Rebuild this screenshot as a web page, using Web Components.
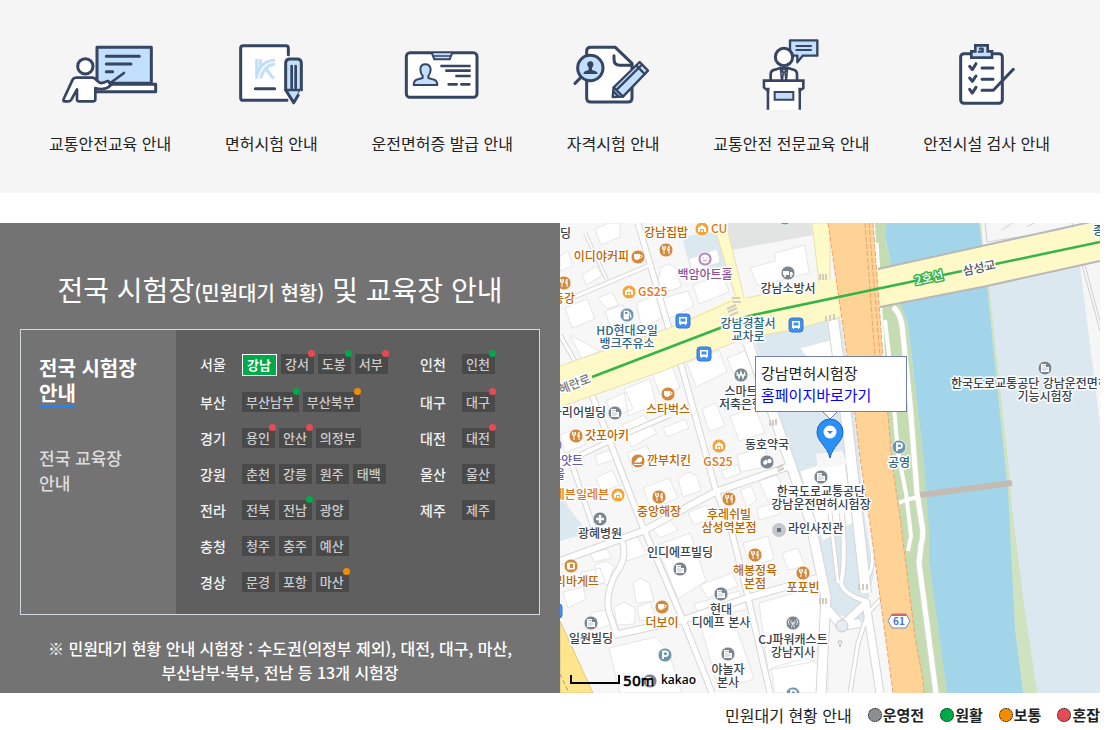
<!DOCTYPE html>
<html lang="ko">
<head>
<meta charset="utf-8">
<title>전국 시험장 및 교육장 안내</title>
<style>
  body {
    margin: 0 9px 0 0;
    background: #fff;
    color: #222;
    font: 16px/24px "Noto Sans CJK KR", "Noto Sans", sans-serif;
    overflow: hidden;
  }
</style>
</head>
<body>
<guide-page></guide-page>

<template id="page">
  <style>
    :host { display: block; }
    .columns { display: grid; grid-template-columns: 28fr 27fr; margin-top: 30px; }
  </style>
  <shortcut-bar>
    <shortcut-item icon="lecture">교통안전교육 안내</shortcut-item>
    <shortcut-item icon="exam">면허시험 안내</shortcut-item>
    <shortcut-item icon="license">운전면허증 발급 안내</shortcut-item>
    <shortcut-item icon="qualify">자격시험 안내</shortcut-item>
    <shortcut-item icon="podium">교통안전 전문교육 안내</shortcut-item>
    <shortcut-item icon="checklist">안전시설 검사 안내</shortcut-item>
  </shortcut-bar>
  <div class="columns">
    <center-panel>
      <region-row name="서울"><center-chip selected>강남</center-chip><center-chip status="busy">강서</center-chip><center-chip status="good">도봉</center-chip><center-chip status="busy">서부</center-chip></region-row>
      <region-row name="인천"><center-chip status="good">인천</center-chip></region-row>
      <region-row name="부산"><center-chip status="good">부산남부</center-chip><center-chip status="normal">부산북부</center-chip></region-row>
      <region-row name="대구"><center-chip status="busy">대구</center-chip></region-row>
      <region-row name="경기"><center-chip status="busy">용인</center-chip><center-chip status="busy">안산</center-chip><center-chip>의정부</center-chip></region-row>
      <region-row name="대전"><center-chip status="busy">대전</center-chip></region-row>
      <region-row name="강원"><center-chip>춘천</center-chip><center-chip>강릉</center-chip><center-chip>원주</center-chip><center-chip>태백</center-chip></region-row>
      <region-row name="울산"><center-chip>울산</center-chip></region-row>
      <region-row name="전라"><center-chip>전북</center-chip><center-chip status="good">전남</center-chip><center-chip>광양</center-chip></region-row>
      <region-row name="제주"><center-chip>제주</center-chip></region-row>
      <region-row name="충청" class="wide"><center-chip>청주</center-chip><center-chip>충주</center-chip><center-chip>예산</center-chip></region-row>
      <region-row name="경상" class="wide"><center-chip>문경</center-chip><center-chip>포항</center-chip><center-chip status="normal">마산</center-chip></region-row>
    </center-panel>
    <center-map></center-map>
  </div>
  <status-legend>
    <status-key color="#8b8f90">운영전</status-key>
    <status-key color="#00aa4b">원활</status-key>
    <status-key color="#f08c00">보통</status-key>
    <status-key color="#e54b55">혼잡</status-key>
  </status-legend>
</template>

<template id="bar">
  <style>
    :host { display: block; background: #f5f5f5; }
    nav { display: flex; justify-content: space-between; padding: 34px 50px 38px 49px; }
  </style>
  <nav aria-label="바로가기"><slot></slot></nav>
</template>

<template id="item">
  <style>
    :host { display: block; }
    a { display: flex; flex-direction: column; align-items: center; gap: 17px; color: #222; text-decoration: none; }
    svg { width: 100px; height: 80px; margin: 0 -10px; fill: none; stroke: #364561; stroke-width: 9; stroke-linecap: round; stroke-linejoin: round; }
    .w { fill: #fff; } .b { fill: #c2dffd; }
    .solid { fill: #364561; stroke: none; }
  </style>
  <a href="#"><svg aria-hidden="true"></svg><span><slot></slot></span></a>
</template>

<template id="panel">
  <style>
    :host { display: block; background: #737373; color: #fff; }
    .inner { padding: 46px 20px 9px; text-align: center; }
    h2 { margin: 0 0 20px; font-size: 28px; line-height: 40px; font-weight: 400; }
    small { font-size: 20px; line-height: 20px; font-weight: 500; }
    .box { display: grid; grid-template-columns: 155px 1fr; border: 1px solid #d3d8e0; text-align: left; }
    .tabs { display: flex; flex-direction: column; align-items: flex-start; gap: 38px; padding: 25px 18px; }
    .tabs a { width: 110px; color: #ddd; font-size: 17px; line-height: 25px; font-weight: 500; text-decoration: none; }
    .tabs a.on { color: #fff; font-size: 20px; font-weight: 700; }
    .tabs a.on u { text-decoration: none; display: inline-block; border-bottom: 2px solid #1e85ff; }
    .rows { display: grid; grid-template-columns: 220px 1fr; row-gap: 16px; align-content: start; padding: 24px 0 22px 24px; background: #5f5f5f; }
    ::slotted(.wide) { grid-column: 1 / -1; }
    p { margin: 21px 0 0; font-weight: 500; }
  </style>
  <div class="inner">
    <h2>전국 시험장<small>(민원대기 현황)</small> 및 교육장 안내</h2>
    <div class="box">
      <nav class="tabs"><a class="on" href="#">전국 시험장<br><u>안내</u></a><a href="#">전국 교육장<br>안내</a></nav>
      <div class="rows"><slot></slot></div>
    </div>
    <p>※ 민원대기 현황 안내 시험장 : 수도권(의정부 제외), 대전, 대구, 마산,<br>부산남부·북부, 전남 등 13개 시험장</p>
  </div>
</template>

<template id="row">
  <style>
    :host { display: grid; grid-template-columns: 42px 1fr; align-items: start; }
    b { color: #f3f3f3; font-size: 14px; line-height: 20px; font-weight: 500; }
    div { display: flex; gap: 4px; align-items: flex-start; }
  </style>
  <b></b><div><slot></slot></div>
</template>

<template id="chip">
  <style>
    :host { display: block; position: relative; }
    button { display: block; margin: 0; padding: 0 5px 0 4px; border: 0; border-radius: 0; background: #494949; color: #ccc; font: 500 13px/20px "Noto Sans CJK KR", sans-serif; cursor: pointer; }
    :host([selected]) button { border: 1px solid #fff; background: #00aa4b; color: #fff; font-weight: 700; }
    i { display: none; position: absolute; top: -4px; right: -1px; width: 7px; height: 7px; border-radius: 50%; }
    :host([status]) i { display: block; }
    :host([status=good]) i { background: #00aa4b; }
    :host([status=normal]) i { background: #f08c00; }
    :host([status=busy]) i { background: #e54b55; }
  </style>
  <button type="button"><slot></slot></button><i></i>
</template>

<template id="legend">
  <style>
    :host { display: flex; justify-content: flex-end; align-items: center; gap: 16px; padding-top: 10px; line-height: 24px; white-space: nowrap; }
  </style>
  <span>민원대기 현황 안내</span><slot></slot>
</template>

<template id="key">
  <style>
    :host { display: flex; align-items: center; gap: 1px; font-size: 15px; font-weight: 700; }
    i { box-sizing: border-box; width: 14px; height: 14px; border: 1px dotted #000; border-radius: 50%; }
  </style>
  <i></i><slot></slot>
</template>

<template id="map">
  <style>
    :host { display: block; position: relative; overflow: hidden; background: #f7f7f7; }
    svg { display: block; width: 100%; height: 100%; min-height: 100%; }
    text { font-family: "Noto Sans CJK KR", sans-serif; font-size: 12px; font-weight: 500; text-anchor: middle; paint-order: stroke; stroke: #fff; stroke-width: 3px; stroke-linejoin: round; }
    .edge { fill: none; stroke: #d6d6d6; stroke-linejoin: round; }
    .road { fill: none; stroke: #fff; stroke-linejoin: round; }
    .bld { fill: #fff; stroke: #e6e6e6; }
    .info { position: absolute; left: 195px; top: 133px; box-sizing: border-box; width: 152px; padding: 5px; border: 1px solid #6f7fae; background: #fff; color: #222; font-size: 15px; line-height: 22px; white-space: nowrap; }
    .info span, .info a { display: block; }
    .info a { color: #00f; text-decoration: none; }
  </style>
  <svg viewBox="0 0 540 470" preserveAspectRatio="xMinYMin slice" role="img" aria-label="강남면허시험장 지도">
    <rect width="540" height="470" fill="#f7f7f7"/>
    <!-- campus and public ground -->
    <path d="M122 14L157 8 168 42 160 48 132 52ZM193 113L270 97 280 94 295 190 304 290 314 350 303 400 268 388 250 300 215 185Z" fill="#dce8f0"/>
    <path d="M0 264L8 284 28 310 0 318Z" fill="#dce8f0"/>
    <path d="M166 0H251L253 12 172 27Z" fill="#e2e3e3"/>
    <g class="bld">
      <path d="M0 33l8-5 5 15-13 5zM22 52l15-9 5 10-16 9zM101 44l8-3 8 5 4 18-18 6-5-12zM129 36l28-10 3 13-28 10zM133 62l30-11 6 18-30 12zM190 45l25-7 0-8 30-8 4 28-51 13z"/>
      <path d="M5 85l22-9 8 20-23 9zM38 75l14-6 7 13-12 4zM45 88l18-6 6 16-18 7zM76 80l20-8 6 23-20 10zM100 76l28-8 6 15-28 14zM10 112l30 16-18 8zM35 6l14-6h11v14l-19 8z"/>
      <path d="M46 178l20-9 7 17-19 8zM64 166l26-10 6 25-28 12zM92 150l20-7 8 22-20 7zM127 140l32-13 8 22-31 15zM167 135l18-7 12 20-20 10zM142 186l14-6 9 23-16 5zM170 193l25-8 10 25-26 8zM62 202l22-10 13 18-25 14zM103 205l22-9 4 9-22 9zM0 212l16-7 10 16-21 9z"/>
      <path d="M35 232l16-5 5 9-18 6zM36 255l16-8 7 15-18 7zM67 230l20-7 7 18-20 8zM83 265l26-10 9 20-27 11zM118 256l10-7 9 4 4 15-18 6zM161 248l16-7 4 9-16 6zM177 232l28-9 3 20-27 6zM180 267l11-4 6 14-10 7zM199 258l18-6 9 19-17 9zM197 285l18-5 5 11-21 6zM128 290l18-8 8 12-20 8zM92 305l18-8 8 10-18 8z"/>
      <path d="M60 320l17-7 10 18-20 7zM30 330l17-4 5 9-18 4zM35 342l11-4 8 5-6 19-11-3zM20 350l20-5 5 14-20 9zM3 369l20-5 3 12-18 9zM73 360l8-5 8 5 5 18-18 2zM54 384l10-5 11 6v16l-18 1zM77 384l13-5 6 16-16 3zM30 390l19-4 6 14-17 6zM98 322l32-12 16 48-28 18-20-50z"/>
      <path d="M140 362l32-12 6 13-31 12zM183 320l25-7 6 23-24 8zM222 330l16-5 7 18-17 4zM134 381l45-13 9 18-47 10zM49 425l46-11 13 13 14 43H60zM140 400l32-9 22 65-35 11zM199 380l60-17 3 48-10 28-44 8zM211 445l35-10 22 10v25h-53z"/>
      <path d="M240 248l25-8 20 0 8 60-30 18-8-20zM240 125l30-8 5 16-25 6z"/>
    </g>
    <!-- local streets: grey edge, then white surface -->
    <g id="streets"></g>
    <!-- stream banks and water -->
    <path d="M315 0H420L540 0V470H333L323 133Z" fill="#c5dcb2"/>
    <path d="M422 0L448 240 452 287 463 377 477 470H540V0Z" fill="#dce8f0"/>
    <path d="M327 0L325 18 332 45 342 83 347 100 364 240 371 307 369 337 387 470H477L463 377 452 287 448 240 422 0Z" fill="#d0e3c1"/>
    <path d="M327 0L325 12 332 45 344 90 348 101 364 240 369 307 369 337 387 470H463L455 407 448 267 445 240 427 63 419 0Z" fill="#a2d5ea"/>
    <path d="M421 0H540V25L423 22ZM520 43L540 200V38Z" fill="#f6f6f6"/>
    <path d="M425 0l2 19 87-14-2-5M442 7l10-7M467 4l7-4M522 42l18 66M525 42l15 56" fill="none" stroke="#d0d0d0"/>
    <g fill="none" stroke="#fff">
      <path d="M316 20l7 120" stroke-width="5"/>
      <path d="M333 84Q342 91 343 112L350 180 357 270 362 302Q364 312 361 322L359 340 376 470" stroke="#d6dccf" stroke-width="7"/>
      <path d="M333 84Q342 91 343 112L350 180 357 270 362 302Q364 312 361 322L359 340 376 470" stroke-width="5"/>
      <path d="M325 97L331 150 338 230 346 270 351 313 348 328M339 280l7-3 16-4" stroke-width="4"/>
    </g>
    <path d="M360 272L452 260" stroke="#c5bbb5" stroke-width="6"/>
    <!-- arterial roads -->
    <path d="M153 0H166L184 75H176Z M252 0H270V60H259Z" fill="#fffbc8" stroke="#e8dfb0"/>
    <path d="M0 143L115 103 177 72 184 75 253 60 270 57 318 46 422 23 540-1V38L427 63 320 84 280 94 233 107 185 115 100 149 0 184Z" fill="#fff9c7"/>
    <path d="M0 143L115 103 174 77M187 75L253 60M280 94L233 107 185 115 100 149 0 184" fill="none" stroke="#e8dfb0"/>
    <path d="M318 46L422 23 535-2M320 84L427 63 540 38" fill="none" stroke="#b8b8b8" stroke-width="2"/>
    <path d="M268 0L280 83 295 190 300 235 310 300 333 470H364L363 457 355 414 340 294 332 240 323 133 313 0Z" fill="#ffd396"/>
    <path d="M268 0L280 83 295 190 300 235 310 300 333 470M305 0L315 133M309 0L320 133M313 0L323 133 332 240 340 294 355 414 363 457 364 470" fill="none" stroke="#efa26e" stroke-dasharray="5 2"/>
    <path d="M0 398L33 470H0Z" fill="#ffe58b" stroke="#dec888"/>
    <path d="M0 451l9 19" stroke="#999" stroke-dasharray="4 3"/>
    <path d="M172 75h8m-7 4h8M167 86l9-4m-8 7l9-4m-8 8l9-4M260 51v6m3-6v6m3-6v6M266 93v5m4-6v6m4-7v6M210 197v6m3-6v6m3-7v6M217 245l6-3m-5 6l6-3M260 375v6m3-6v6m3-6v6M299 361v6m4-6v6m4-6v6" stroke="#d3cbc0" stroke-width="2"/>
    <path d="M32 154L160 105Q178 96 193 92L540 19" fill="none" stroke="#35b44a" stroke-width="2.5"/>
    <circle cx="282" cy="403" r="6" fill="#e5edf2" stroke="#c8c8c8"/>
    <path d="M278 418l4 0-2 6z" fill="#fff" stroke="#bbb"/>
    <!-- route shield -->
    <path d="M332 391h14l4 7-4 7h-14l-4-7z" fill="#fff" stroke="#6d8bd0"/>
    <path d="M332 391h14l1 2h-16z" fill="#c96a6a"/>
    <g id="pois"></g>
    <!-- scale -->
    <path d="M11 452v8h48v-8" fill="none" stroke="#000" stroke-width="2"/>
    <!-- selected centre -->
    <path d="M256 231l26-3 6 13-30 5z" fill="#f7f7f7"/>
    <path d="M262 188L270 196 278 188" fill="#fff" stroke="#6f7fae"/>
    <path d="M270 235C267 222 257 219 257 209A13 13 0 0 1 283 209C283 219 273 222 270 235Z" fill="#2b90f5" stroke="#1666bd"/>
    <circle cx="270" cy="209" r="6.500" fill="#fff"/><path d="M267 208h6l-3 3z" fill="#2b86e8"/>
  </svg>
  <div class="info"><span>강남면허시험장</span><a href="#">홈페이지바로가기</a></div>
</template>

<script>
const tpl = id => document.getElementById(id).content.cloneNode(true);

class Templated extends HTMLElement {
  static template = '';
  constructor() {
    super();
    this.attachShadow({ mode: 'open' }).append(tpl(this.constructor.template));
  }
  $(selector) { return this.shadowRoot.querySelector(selector); }
}

// Each drawing: [viewBox, markup]
const DRAWINGS = {
  lecture: ['60 12 300 240', `
    <path class="b" d="M171 52H334V160H171Z"/><path class="w" d="M165 163H347V185H165Z"/>
    <path d="M199 79H298M199 102H273M199 125H218"/>
    <circle class="w" cx="136" cy="109" r="23"/>
    <path class="w" stroke-width="8" d="M110 143H158Q165 144 171 152 180 162 190 158L203 153Q209 154 208 160H215L211 167Q192 183 166 174V208Q166 214 160 214H116Q111 214 111 208V178L94 209Q91 214 86 214H75Q68 214 71 207L98 149Q101 143 110 143Z"/>
    <path stroke-width="8" d="M211 159L252 129"/>`],
  exam: ['543 12 300 240', `
    <path class="w" d="M745 74V54Q745 47 738 47H610Q602 47 602 55V203Q602 211 610 211H741"/>
    <path d="M646 176H704"/>
    <g stroke="#c2dffd" stroke-width="9" stroke-linecap="butt"><path d="M650 87V146M661 87V112M705 91Q665 91 651 134M705 103Q673 104 662 145M678 117L701 146"/></g>
    <path class="b" d="M737 180V100Q737 87 750 87H771Q784 87 784 100V180L761 218Z"/>
    <path stroke-width="8" d="M737 180H784M755 108V174M767 108V174"/>
    <path stroke-width="8" stroke="#f5f5f5" stroke-linecap="butt" d="M785 184L778 194"/>
    <path class="solid" d="M754 209L761 224 768 209Z"/>`],
  license: ['97 12 300 240', `
    <rect class="w" x="140" y="68" width="212" height="134" rx="11"/>
    <path class="b" stroke-width="6" d="M217 70L224 88H270L277 70"/><path stroke-width="5" d="M224 78H270"/>
    <path class="b" stroke-width="6" d="M162 165Q162 151 175 148L189 144V138Q182 130 182 118 183 103 197 103 211 103 213 118 213 130 206 138V144L219 148Q233 151 233 165Z"/>
    <path stroke-width="8" stroke-linecap="butt" d="M242 108H333M257 122H333M287 138H333"/><path stroke-width="8" d="M267 163H291M305 163H329"/>`],
  qualify: ['613 12 300 240', `
    <path class="w" d="M684 72V64Q684 52 696 52H770L820 100V204Q820 216 808 216H697Q684 216 684 204Z"/>
    <path d="M766 77V88Q766 106 784 106H820"/>
    <circle class="b" cx="695" cy="114" r="38"/><path d="M666 143L649 160"/>
    <path class="solid" d="M674 132Q674 123 690 120V113Q683 106 686 99 690 92 698 94 706 98 704 107L700 114V120Q717 123 717 132Z"/>
    <path class="b" stroke-width="7" d="M765 172L843 96 868 122 793 200 762 201Z"/>
    <path stroke-width="7" d="M765 172L793 200M833 107L858 132M775 178L849 105M763 183L780 200"/>`],
  podium: ['127 12 300 240', `
    <path class="b" stroke-width="7" d="M274 31H356V77H312L296 97V77H274Z"/><path stroke-width="6" d="M293 48H337M293 60H337"/>
    <circle class="w" cx="256" cy="81" r="26"/>
    <path class="w" stroke-width="8" d="M216 150V132Q216 122 229 119L245 114H267L285 119Q295 122 295 132V150"/>
    <path class="w" stroke-width="5" d="M245 112L249 151M267 112L263 151M250 118H262L260 126H252ZM254 127L251 150M259 127L262 150"/>
    <path class="w" stroke-width="8" stroke-linecap="butt" stroke-linejoin="miter" d="M208 239V174M303 239V174"/>
    <path class="w" stroke-width="8" stroke-linejoin="miter" d="M196 152H314V174L303 182V174H208V182L196 172Z"/>
    <path fill="#fff" stroke="none" d="M201 157H309V173H299V239H213V173H201Z"/>
    <path class="b" stroke-width="6" stroke-linejoin="miter" d="M228 186H284V209H228Z"/>`],
  checklist: ['714 12 300 240', `
    <rect class="w" x="785" y="71" width="125" height="149" rx="10"/>
    <path class="b" stroke-width="8" stroke-linejoin="miter" d="M817 64H829V46H866V64H879V83H817Z"/><path stroke-width="7" d="M843 56H851V65H840"/>
    <path d="M812 109L820 119 831 101M812 144L820 154 831 138M812 178L820 189 831 172M849 114H882M849 148H882M849 181H883L943 118"/>`]
};

customElements.define('shortcut-item', class extends Templated {
  static template = 'item';
  connectedCallback() {
    const [box, art] = DRAWINGS[this.getAttribute('icon')];
    const svg = this.$('svg');
    svg.setAttribute('viewBox', box);
    svg.innerHTML = art;
  }
});
customElements.define('shortcut-bar', class extends Templated { static template = 'bar'; });
customElements.define('center-chip', class extends Templated { static template = 'chip'; });
customElements.define('center-panel', class extends Templated { static template = 'panel'; });
customElements.define('status-legend', class extends Templated { static template = 'legend'; });
customElements.define('region-row', class extends Templated {
  static template = 'row';
  connectedCallback() { this.$('b').textContent = this.getAttribute('name'); }
});
customElements.define('status-key', class extends Templated {
  static template = 'key';
  connectedCallback() { this.$('i').style.background = this.getAttribute('color'); }
});

// [width, path]
const STREETS = [
  [5, 'M78 0L109 106'], [2, 'M25 10L47 57'], [3, 'M0 80L90 42'], [3, 'M0 112L17 142'],
  [5, 'M120 138L155 264 172 310 188 374 210 470'], [5, 'M32 172L80 297 123 397 152 470'],
  [4, 'M0 242L56 215 110 192'], [6, 'M0 338L83 308 155 269 227 244'],
  [6, 'M54 412L123 397 187 375 257 355'], [5, 'M62 318Q68 335 55 352 44 375 50 392L57 412'],
  [4, 'M8 230L36 312'], [9, 'M188 120L213 190 250 297 266 374 261 470'],
  [10, 'M273 97L287 200 306 370'], [7, 'M282 403L306 380 320 470'], [8, 'M266 385L282 403 300 400'],
  [4, 'M306 378Q284 372 281 360 286 340 282 290'], [3, 'M270 290L278 360M290 470L298 420 308 390 322 375'], [3, 'M307 355Q314 345 312 330']
];

const INK = { food: '#be6400', shop: '#e0761a', gray: '#39424d', art: '#8c5199', hotel: '#6a5aae', public: '#2f6682' };
const DISC = { food: '#d1893d', shop: '#f3a43c', gray: '#7b858f', art: '#b38abb', hotel: '#8778c0', public: '#6d96ae' };
const GLYPH = {
  fork: '<path d="M-3.500-4v3q1.500 1.500 3 0v-3M-2-4v8M3-4q-2 2-1 5h1zM3-1v5" stroke="#fff" fill="none"/>',
  cup: '<path d="M-4-3h6v4q-1 2-3 2t-3-2z" fill="#fff"/><path d="M2-2q3 0 2 2l-2 1" stroke="#fff" fill="none"/>',
  store: '<path d="M-4 3V-1L0-4 4-1V3H2V0H-2V3Z" fill="#fff"/><path d="M-1 1h2v2h-2z" fill="#fff"/>',
  building: '<path d="M-4-4H1V-1H4V4H-4Z" fill="#fff"/><path d="M-2.500-2.500h1m1 0h1M-2.500 0h1m1 0h1m1 1h1M-2.500 2h1m1 0h1" stroke="#7b858f"/>',
  park: '<path d="M-2 4V-3.500H.5Q3-3.500 3-1.200 3 1 .5 1H-2" fill="none" stroke="#fff" stroke-width="1.800"/>',
  cross: '<path d="M-4 0H4M0-4V4" stroke="#fff" stroke-width="2.500"/>',
  gas: '<path d="M-3 4V-4H1.500V4ZM2-1L4 0V3M2-3L4-1" fill="#fff" stroke="#fff" stroke-width=".8"/><path d="M-2-3h2.500v2H-2z" fill="#6d96ae"/>',
  won: '<path d="M-4-3L-2 3 0-3 2 3 4-3M-5 0H5" fill="none" stroke="#fff" stroke-width="1.200"/>',
  pills: '<g fill="#fff"><rect x="-4.500" y="-1.500" width="5" height="4" rx="2" transform="rotate(-50 -2 0)"/><circle cx="2.500" cy="-1" r="2.200"/></g>',
  antenna: '<path d="M-1.500-2.500q-1.500 1.500 0 3M1.500-2.500q1.500 1.500 0 3M-3.500-4q-2.500 3 0 6M3.500-4q2.500 3 0 6M0-1L-1.500 4.500M0-1L1.500 4.500" fill="none" stroke="#fff" stroke-width=".8"/>',
  smile: '<circle r="4.500" fill="#fff"/><path d="M-2-1.500v1M2-1.500v1M-2 1q2 2 4 0" fill="none" stroke="#b38abb"/>',
  truck: '<path d="M-5-2H1V2H-5ZM2-1H4L5 1V2H2Z" fill="#fff"/><circle cx="-3" cy="3" r="1" fill="#fff"/><circle cx="3" cy="3" r="1" fill="#fff"/>',
  bread: '<rect x="-4" y="-3.500" width="8" height="7" rx="1.500" fill="#fff"/><path d="M-1-2v4h3v-4z" fill="#d1893d"/>',
  chicken: '<path d="M-4 3.500H4" stroke="#fff"/><path d="M-4 1.500L0-3Q3-5 4-3V0L2 1.500Z" fill="#fff"/>',
  photo: '<rect x="-2" y="-2" width="4" height="4" fill="#69727c"/>'
};

// [kind, glyph, x, y]
const DISCS = [
  ['food','fork',106,27], ['shop','store',142,6], ['food','cup',78,34], ['art','smile',145,36], ['gray','truck',228,50],
  ['food','fork',4,60], ['shop','store',69,69], ['public','gas',67,92], ['gray','won',181,152], ['food','cup',108,171],
  ['gray','building',55,190], ['food','fork',16,213], ['hotel','photo',-5,222], ['food','chicken',78,238], ['shop','store',159,223],
  ['gray','pills',207,239], ['shop','store',58,272], ['food','fork',99,274], ['food','fork',169,276], ['gray','building',261,254],
  ['gray','cross',40,296], ['gray','building',120,346], ['food','fork',195,332], ['food','fork',243,350],
  ['food','bread',11,343], ['gray','building',161,371], ['food','cup',102,384], ['gray','building',31,400], ['public','park',105,432],
  ['gray','antenna',233,400], ['gray','building',168,431], ['public','park',233,471], ['gray','building',90,458],
  ['gray','building',485,145], ['public','park',339,224], ['public','park',225,-5]
];

// [kind, text with | between lines, x, vertical middle of the first line, anchor]
const LABELS = [
  ['gray','딩',11,11,'end'], ['food','강남집밥',106,10], ['shop','CU',151,6,'start'], ['food','이디야커피',69,34,'end'],
  ['art','백암아트홀',145,52], ['gray','강남소방서',228,66], ['food','동강',15,76,'end'], ['shop','GS25',78,69,'start'],
  ['public','HD현대오일|뱅크주유소',67,108], ['public','강남경찰서|교차로',188,101],
  ['gray','스마트|저축은행',181,169], ['food','스타벅스',108,187], ['gray','마리어빌딩',46,190,'end'],
  ['food','갓포아키',25,213,'start'], ['hotel','하얏트',23,238,'end'], ['hotel','서울',5,252,'end'], ['food','깐부치킨',87,238,'start'],
  ['shop','GS25',158,239], ['gray','동호약국',207,222], ['shop','세븐일레븐',49,272,'end'], ['food','중앙해장',99,289],
  ['food','후레쉬빌|삼성역본점',169,292], ['gray','한국도로교통공단|강남운전면허시험장',261,269],
  ['gray','라인사진관',228,306,'start'], ['gray','광혜병원',40,311], ['gray','인디에프빌딩',120,330], ['food','해봉정육|본점',195,348],
  ['food','포포빈',243,365], ['food','파리바게뜨',39,359,'end'], ['gray','현대|디에프 본사',161,387],
  ['food','더보이',102,400], ['gray','일원빌딩',31,416], ['gray','CJ파워캐스트|강남지사',233,417],
  ['gray','야놀자|본사',168,447], ['public','공영',339,240],
  ['gray','한국도로교통공단 강남운전면허',391,161,'start'], ['gray','기능시험장',485,174], ['public','종합',533,8,'start']
];

customElements.define('center-map', class extends Templated {
  static template = 'map';
  connectedCallback() {
    this.$('#streets').innerHTML =
      STREETS.map(([w, d]) => `<path class="edge" stroke-width="${w + 2}" d="${d}"/>`).join('') +
      STREETS.map(([w, d]) => `<path class="road" stroke-width="${w}" d="${d}"/>`).join('');
    const discs = DISCS.map(([kind, glyph, x, y]) =>
      `<g transform="translate(${x} ${y})"><circle r="7" fill="${DISC[kind]}" stroke="#fff" stroke-width=".8"/>${GLYPH[glyph]}</g>`);
    const buses = [[123, 98], [144, 131], [236, 102], [-5, 388]].map(([x, y]) =>
      `<g transform="translate(${x} ${y})"><rect x="-7" y="-7" width="14" height="14" rx="3" fill="#458ff0" stroke="#2f74d0"/><path d="M-4-4H4V3H3V4H2V3H-2V4H-3V3H-4Z" fill="#fff"/><path d="M-2.500-2.500h5v3h-5z" fill="#458ff0"/></g>`);
    const labels = LABELS.map(([kind, text, x, y, anchor = 'middle']) => {
      const lines = text.split('|').map((line, i) => `<tspan x="${x}" y="${y + 4 + i * 13}">${line}</tspan>`);
      return `<text fill="${INK[kind]}" style="text-anchor:${anchor}">${lines.join('')}</text>`;
    });
    this.$('#pois').innerHTML = discs.join('') + buses.join('') + labels.join('') + `
      <g transform="translate(219 307)"><circle r="7" fill="#c3c8cd"/>${GLYPH.photo}</g>
      <text transform="translate(11 167) rotate(-21)" style="fill:#777">테헤란로</text>
      <text transform="translate(370 59) rotate(-12)" style="fill:#fff;stroke:#35b44a">2호선</text>
      <text transform="translate(420 49) rotate(-12)" style="fill:#555">삼성교</text>
      <text x="339" y="402" style="font-size:10px;font-weight:700;fill:#4d77c9;stroke:none">61</text>
      <text x="63" y="463" style="font-family:'DejaVu Sans',sans-serif;font-size:14px;text-anchor:start;stroke:#000;stroke-width:.6px">50m</text>
      <text x="101" y="461" style="font-family:'Open Sans',sans-serif;font-size:12px;font-weight:600;text-anchor:start">kakao</text>`;
  }
});

customElements.define('guide-page', class extends Templated { static template = 'page'; });
</script>
</body>
</html>
